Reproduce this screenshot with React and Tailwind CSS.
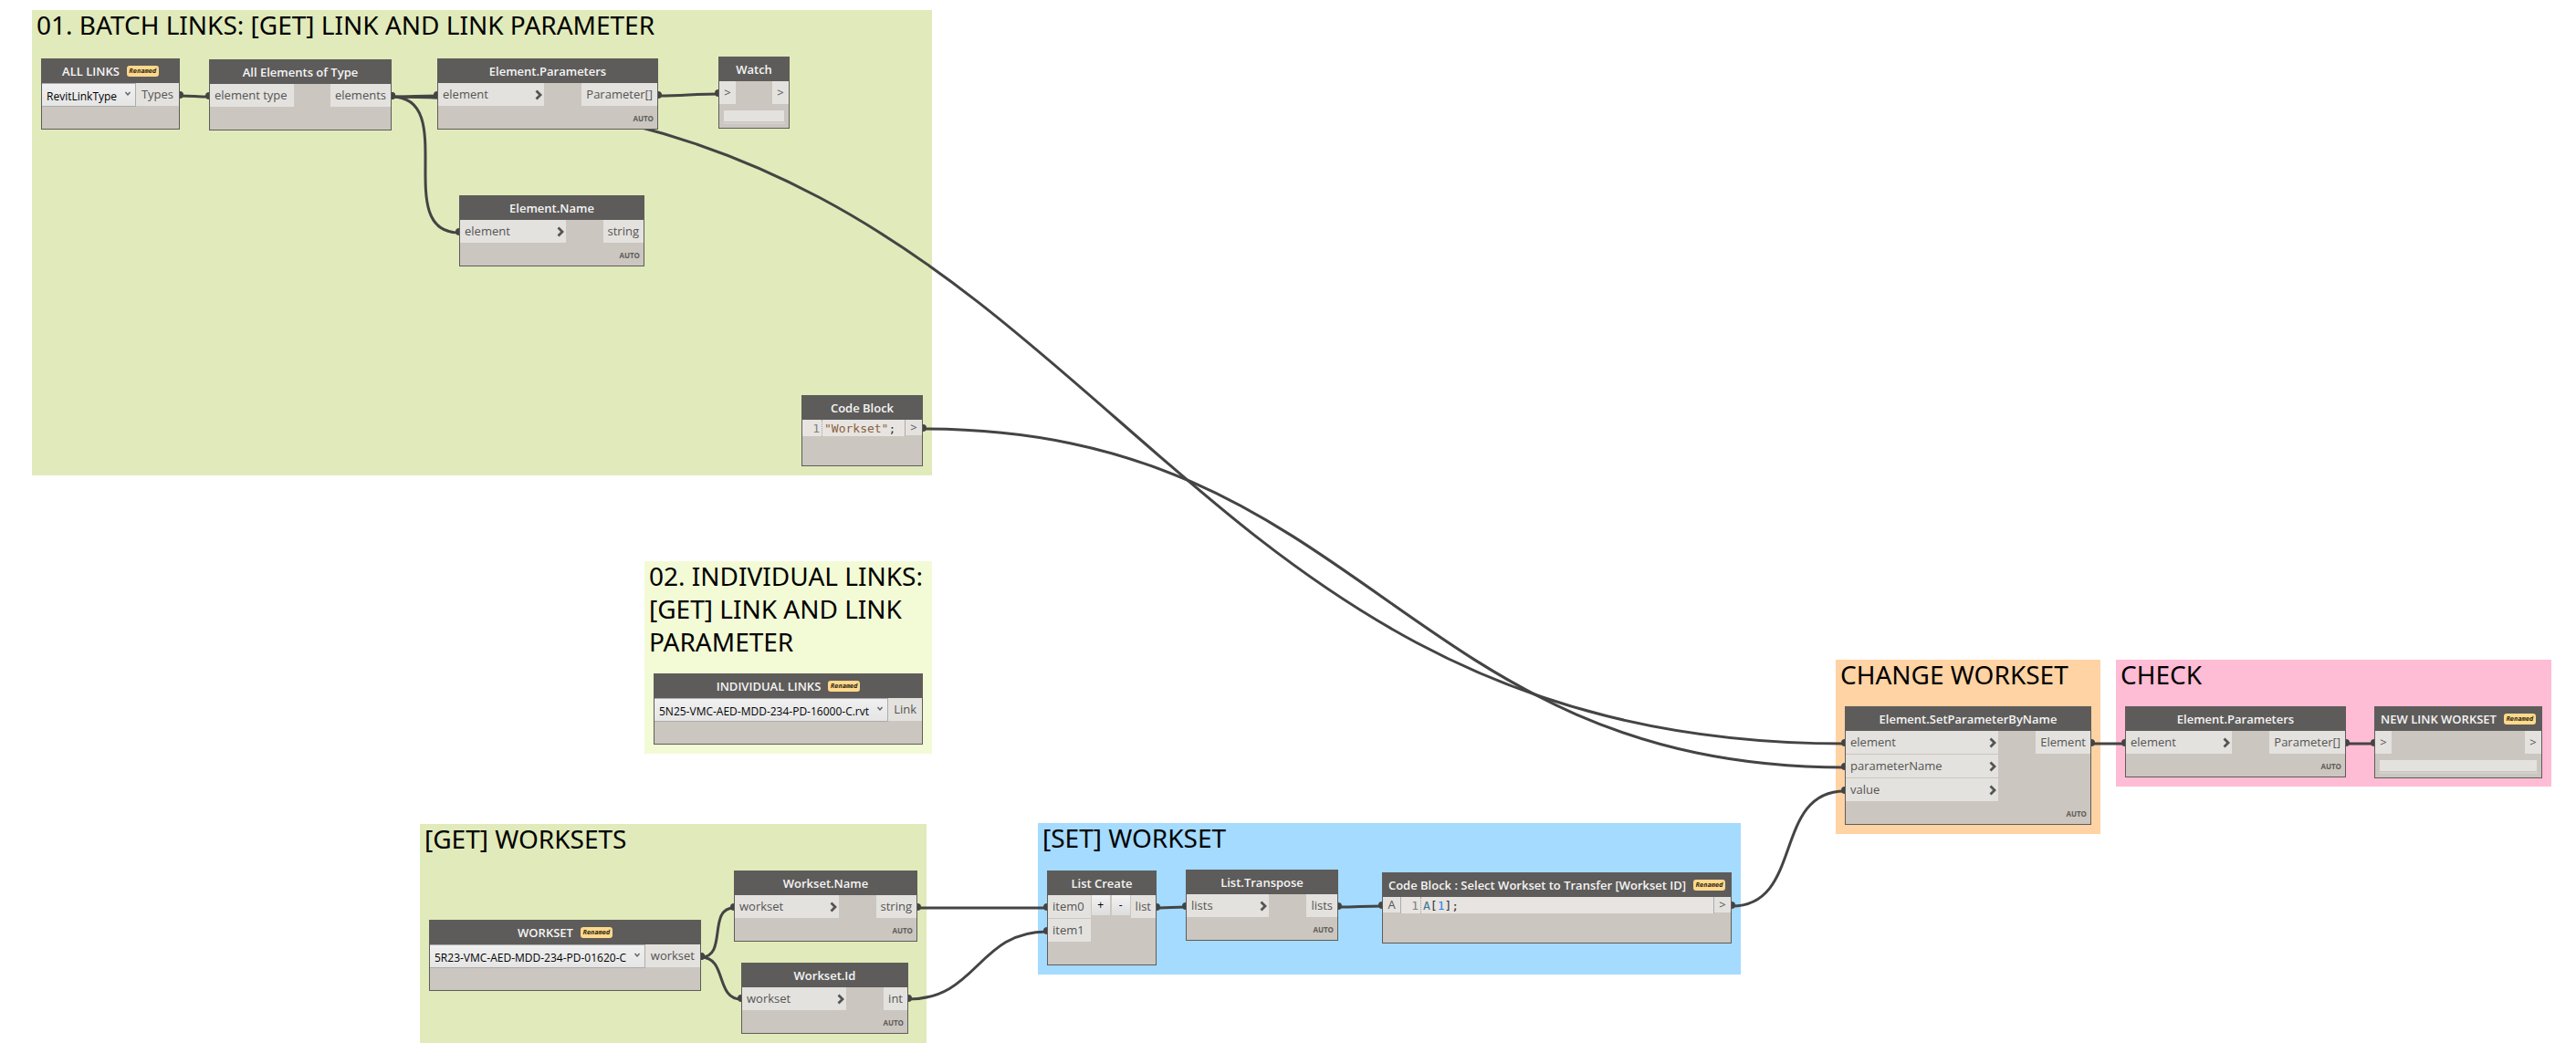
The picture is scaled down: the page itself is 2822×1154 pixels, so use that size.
import React from "react";

const groups = [
  { title: "01. BATCH LINKS: [GET] LINK AND LINK PARAMETER", x: 35, y: 11, w: 986, h: 510, color: "bg-[#e1eaba]" },
  { title: "02. INDIVIDUAL LINKS: [GET] LINK AND LINK PARAMETER", x: 706, y: 615, w: 315, h: 211, color: "bg-[#f3fad6]" },
  { title: "[GET] WORKSETS", x: 460, y: 903, w: 555, h: 240, color: "bg-[#e1eaba]" },
  { title: "[SET] WORKSET", x: 1137, y: 902, w: 770, h: 166, color: "bg-[#a4dbff]" },
  { title: "CHANGE WORKSET", x: 2011, y: 723, w: 290, h: 191, color: "bg-[#ffd3a3]" },
  { title: "CHECK", x: 2318, y: 723, w: 477, h: 139, color: "bg-[#ffbcd5]" },
];

const nodes = [
  { title: "ALL LINKS", renamed: true, x: 45, y: 64, w: 152, h: 78, kind: "select", value: "RevitLinkType", out: "Types" },
  { title: "All Elements of Type", x: 229, y: 65, w: 200, h: 78, kind: "ports", inputs: ["element type"], out: "elements", plain: true },
  { title: "Element.Parameters", x: 479, y: 64, w: 242, h: 78, kind: "ports", inputs: ["element"], inW: 116, out: "Parameter[]", auto: true },
  { title: "Watch", x: 787, y: 62, w: 78, h: 79, kind: "watch" },
  { title: "Element.Name", x: 503, y: 214, w: 203, h: 78, kind: "ports", inputs: ["element"], inW: 116, out: "string", auto: true },
  { title: "Code Block", x: 878, y: 433, w: 133, h: 78, kind: "code", code: [["\"Workset\"", "text-[#8a5f3c]"], [";", "text-[#333333]"]] },
  { title: "INDIVIDUAL LINKS", renamed: true, x: 716, y: 738, w: 295, h: 78, kind: "select", value: "5N25-VMC-AED-MDD-234-PD-16000-C.rvt", out: "Link" },
  { title: "WORKSET", renamed: true, x: 470, y: 1008, w: 298, h: 78, kind: "select", value: "5R23-VMC-AED-MDD-234-PD-01620-C", out: "workset" },
  { title: "Workset.Name", x: 804, y: 954, w: 201, h: 78, kind: "ports", inputs: ["workset"], inW: 114, out: "string", auto: true },
  { title: "Workset.Id", x: 812, y: 1055, w: 183, h: 78, kind: "ports", inputs: ["workset"], inW: 114, out: "int", auto: true },
  { title: "List Create", x: 1147, y: 954, w: 120, h: 104, kind: "ports", inputs: ["item0", "item1"], out: "list", plain: true, stepper: true },
  { title: "List.Transpose", x: 1299, y: 953, w: 167, h: 78, kind: "ports", inputs: ["lists"], inW: 90, out: "lists", auto: true },
  { title: "Code Block : Select Workset to Transfer [Workset ID]", renamed: true, x: 1514, y: 956, w: 383, h: 78, kind: "code", input: "A", code: [["A", "text-[#417690]"], ["[", "text-[#333333]"], ["1", "text-[#2585e5]"], ["];", "text-[#333333]"]] },
  { title: "Element.SetParameterByName", x: 2021, y: 774, w: 270, h: 130, kind: "ports", inputs: ["element", "parameterName", "value"], inW: 167, out: "Element", auto: true },
  { title: "Element.Parameters", x: 2328, y: 774, w: 242, h: 78, kind: "ports", inputs: ["element"], inW: 116, out: "Parameter[]", auto: true },
  { title: "NEW LINK WORKSET", renamed: true, x: 2601, y: 774, w: 184, h: 79, kind: "watch" },
];

const wires = [
  [197, 105, 229, 106],
  [429, 106, 479, 105],
  [429, 106, 503, 255],
  [429, 106, 2021, 815],
  [721, 105, 787, 103],
  [1011, 470, 2021, 841],
  [768, 1049, 804, 995],
  [768, 1049, 812, 1095],
  [1005, 995, 1147, 995],
  [995, 1095, 1147, 1021],
  [1267, 995, 1299, 994],
  [1466, 994, 1514, 993],
  [1897, 993, 2021, 867],
  [2291, 815, 2328, 815],
  [2570, 815, 2601, 815],
];

function wirePath([x1, y1, x2, y2]) {
  const reach = 0.45 * Math.hypot(x2 - x1, y2 - y1);
  return `M${x1},${y1} C${x1 + reach},${y1} ${x2 - reach},${y2} ${x2},${y2}`;
}

function Wires() {
  return (
    <svg className="absolute left-0 top-0 h-[1154px] w-[2822px]" viewBox="0 0 2822 1154" aria-hidden="true">
      {wires.map((w) => (
        <g key={w.join()}>
          <path d={wirePath(w)} fill="none" stroke="#444444" strokeWidth="3" />
          <circle cx={w[0]} cy={w[1] - 1} r="4" fill="#444444" />
          <circle cx={w[2]} cy={w[3] - 1} r="4" fill="#444444" />
        </g>
      ))}
    </svg>
  );
}

function Group({ title, x, y, w, h, color }) {
  return (
    <section className={`absolute pl-[5px] ${color}`} style={{ left: x, top: y, width: w, height: h }}>
      <h2 className="-mt-0.5 font-['Noto_Sans',sans-serif] text-[28px] leading-9 text-black">{title}</h2>
    </section>
  );
}

function Header({ title, renamed }) {
  return (
    <header className="flex h-[26px] items-center justify-center gap-2 bg-[#5e5c5a]">
      <h3 className="whitespace-nowrap text-[13px] font-semibold leading-4 text-[#f5f5f5]">{title}</h3>
      {renamed && (
        <span className="h-3 w-[35px] rounded-[3px] bg-[#ffd88c] text-center font-['DejaVu_Sans_Mono',monospace] text-[7px] font-bold italic leading-3 text-[#2b2410]">
          Renamed
        </span>
      )}
    </header>
  );
}

function Chevron() {
  return (
    <svg className="h-3 w-2" viewBox="0 0 8 12" aria-hidden="true">
      <path d="M1.5 1.5 L6 6 L1.5 10.5" fill="none" stroke="#555452" strokeWidth="2.8" />
    </svg>
  );
}

const port = "flex h-[25px] items-center bg-[#e4e2df] pt-px text-[13px] text-[#555452] whitespace-nowrap";

function SelectBody({ value, out, title }) {
  return (
    <div className="flex">
      <div className="relative h-[26px] flex-1 border-r border-b border-t border-[#acacac] bg-linear-to-b from-[#f0f0f0] to-[#e5e5e5]">
        <select aria-label={title} className="h-full w-full appearance-none pb-[5px] pl-[5px] text-[12px] leading-4 text-black">
          <option>{value}</option>
        </select>
        <svg className="pointer-events-none absolute right-1 top-2 h-[6px] w-[8px]" viewBox="0 0 8 6" aria-hidden="true">
          <path d="M1.5 1 L4 4 L6.5 1" fill="none" stroke="#606060" strokeWidth="1.4" />
        </svg>
      </div>
      <div className={`${port} px-[6px]`}>{out}</div>
    </div>
  );
}

function PortsBody({ inputs, inW, out, plain, stepper }) {
  return (
    <div className="flex items-start">
      <div className="flex flex-col gap-px" style={{ width: inW }}>
        {inputs.map((name) => (
          <div key={name} className={`${port} justify-between pl-[5px] ${plain ? "pr-[7px]" : "pr-[2px]"}`}>
            {name}
            {!plain && <Chevron />}
          </div>
        ))}
      </div>
      {stepper && (
        <div className="ml-px flex gap-[2px]">
          <button className="h-[22px] w-5 bg-linear-to-b from-[#f3f3f3] to-[#dddddd] text-[12px] leading-none text-black">+</button>
          <button className="h-[22px] w-5 bg-linear-to-b from-[#f3f3f3] to-[#dddddd] text-[12px] leading-none text-black">-</button>
        </div>
      )}
      <div className={`${port} ml-auto px-[5px]`}>{out}</div>
    </div>
  );
}

function WatchBody() {
  return (
    <div>
      <div className="flex justify-between">
        <div className={`${port} w-[18px] justify-center`}>&gt;</div>
        <div className={`${port} w-[18px] justify-center`}>&gt;</div>
      </div>
      <div className="mx-[5px] mt-[7px] h-3 bg-[#e4e2df]" />
      <div className="mx-1 mt-px h-[2px] bg-[#d2d0d0]" />
    </div>
  );
}

function CodeBody({ input, code }) {
  return (
    <div className="flex items-start text-[13px] text-[#555452]">
      {input && <div className="h-[17px] w-[19px] bg-[#e4e2df] text-center leading-[17px]">{input}</div>}
      <div className={`flex h-[18px] flex-1 border-r border-[#acacac] bg-[#e7e4e1] font-['DejaVu_Sans_Mono',monospace] leading-5 ${input ? "border-l" : ""}`}>
        <span className="h-[18px] w-[22px] border-r border-dotted border-[#a0a0a0] pr-[2px] text-right text-[#808080]">1</span>
        <code className="whitespace-nowrap pl-[2px] font-['DejaVu_Sans_Mono',monospace]">
          {code.map(([text, color]) => (
            <span key={text} className={color}>{text}</span>
          ))}
        </code>
      </div>
      <div className="h-[17px] w-[18px] bg-[#e4e2df] text-center leading-[17px]">&gt;</div>
    </div>
  );
}

const bodies = { select: SelectBody, ports: PortsBody, watch: WatchBody, code: CodeBody };

function Node(node) {
  const Body = bodies[node.kind];
  return (
    <article
      className="absolute flex flex-col border border-[#5e5c5a] bg-[#cbc6bf] font-['Open_Sans',sans-serif]"
      style={{ left: node.x, top: node.y, width: node.w, height: node.h }}
    >
      <Header title={node.title} renamed={node.renamed} />
      <Body {...node} />
      {node.auto && <span className="mt-auto pb-[5px] pr-1 text-right text-[8px] font-bold leading-3 text-[#5e5c5a]">AUTO</span>}
    </article>
  );
}

export default function App() {
  return (
    <main className="relative min-h-screen w-full overflow-hidden bg-white">
      {groups.map((g) => <Group key={g.title} {...g} />)}
      <Wires />
      {nodes.map((n) => <Node key={`${n.x}-${n.y}`} {...n} />)}
    </main>
  );
}
